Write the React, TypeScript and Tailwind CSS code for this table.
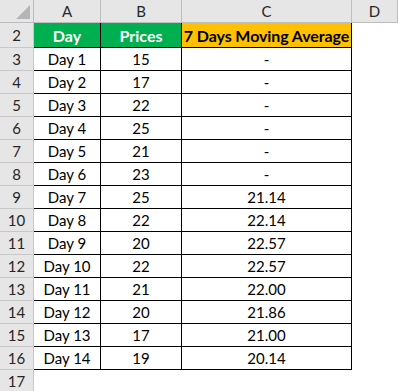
const rows: [string, string, string][] = [
  ["Day 1", "15", "-"],
  ["Day 2", "17", "-"],
  ["Day 3", "22", "-"],
  ["Day 4", "25", "-"],
  ["Day 5", "21", "-"],
  ["Day 6", "23", "-"],
  ["Day 7", "25", "21.14"],
  ["Day 8", "22", "22.14"],
  ["Day 9", "20", "22.57"],
  ["Day 10", "22", "22.57"],
  ["Day 11", "21", "22.00"],
  ["Day 12", "20", "21.86"],
  ["Day 13", "17", "21.00"],
  ["Day 14", "19", "20.14"],
];

const rowHead =
  "flex items-center justify-center pt-[1px] bg-[#e6e6e6] text-[#262626] border-r border-b border-[#c8c8c8]";
const cell = "flex items-center justify-center pt-[1px] border-r border-b border-black text-black";

const App = () => {
  return (
    <div
      className="w-[398px] h-[391px] overflow-hidden bg-white text-[15px] leading-none"
      style={{ fontFamily: "Lato, 'Open Sans', sans-serif" }}
    >
      <div className="grid grid-cols-[34px_67px_81px_170px_1fr]">
        {/* column headers */}
        <div className="relative h-[23px] bg-[#e6e6e6] border-r border-b border-[#bdbdbd]">
          <svg className="absolute right-[3px] bottom-[3px]" width="14" height="14" viewBox="0 0 14 14">
            <polygon points="14,0 14,14 0,14" fill="#b5b5b5" />
          </svg>
        </div>
        {["A", "B", "C", "D"].map((c) => (
          <div
            key={c}
            className="h-[23px] flex items-center justify-center bg-[#e6e6e6] text-[#262626] border-r border-b border-[#bdbdbd]"
          >
            {c}
          </div>
        ))}

        {/* row 2 */}
        <div className={`${rowHead} h-[25px]`}>2</div>
        <div className={`${cell} h-[25px] bg-[#00b050] text-[16px] font-bold`}>
          <span className="text-white">Day</span>
        </div>
        <div className={`${cell} h-[25px] bg-[#00b050] text-[16px] font-bold`}>
          <span className="text-white">Prices</span>
        </div>
        <div className={`${cell} h-[25px] bg-[#ffc000] text-[16px] font-bold tracking-[-0.1px]`}>
          7 Days Moving Average
        </div>
        <div className="h-[25px]" />

        {rows.map(([day, price, avg], i) => (
          <div key={day} className="contents">
            <div className={`${rowHead} h-[23px]`}>{i + 3}</div>
            <div className={`${cell} h-[23px]`}>{day}</div>
            <div className={`${cell} h-[23px]`}>{price}</div>
            <div className={`${cell} h-[23px]`}>{avg}</div>
            <div className="h-[23px]" />
          </div>
        ))}

        <div className={`${rowHead} h-[23px]`}>17</div>
        <div className="h-[23px]" />
        <div className="h-[23px]" />
        <div className="h-[23px]" />
        <div className="h-[23px]" />
      </div>
    </div>
  );
};

export default App;
